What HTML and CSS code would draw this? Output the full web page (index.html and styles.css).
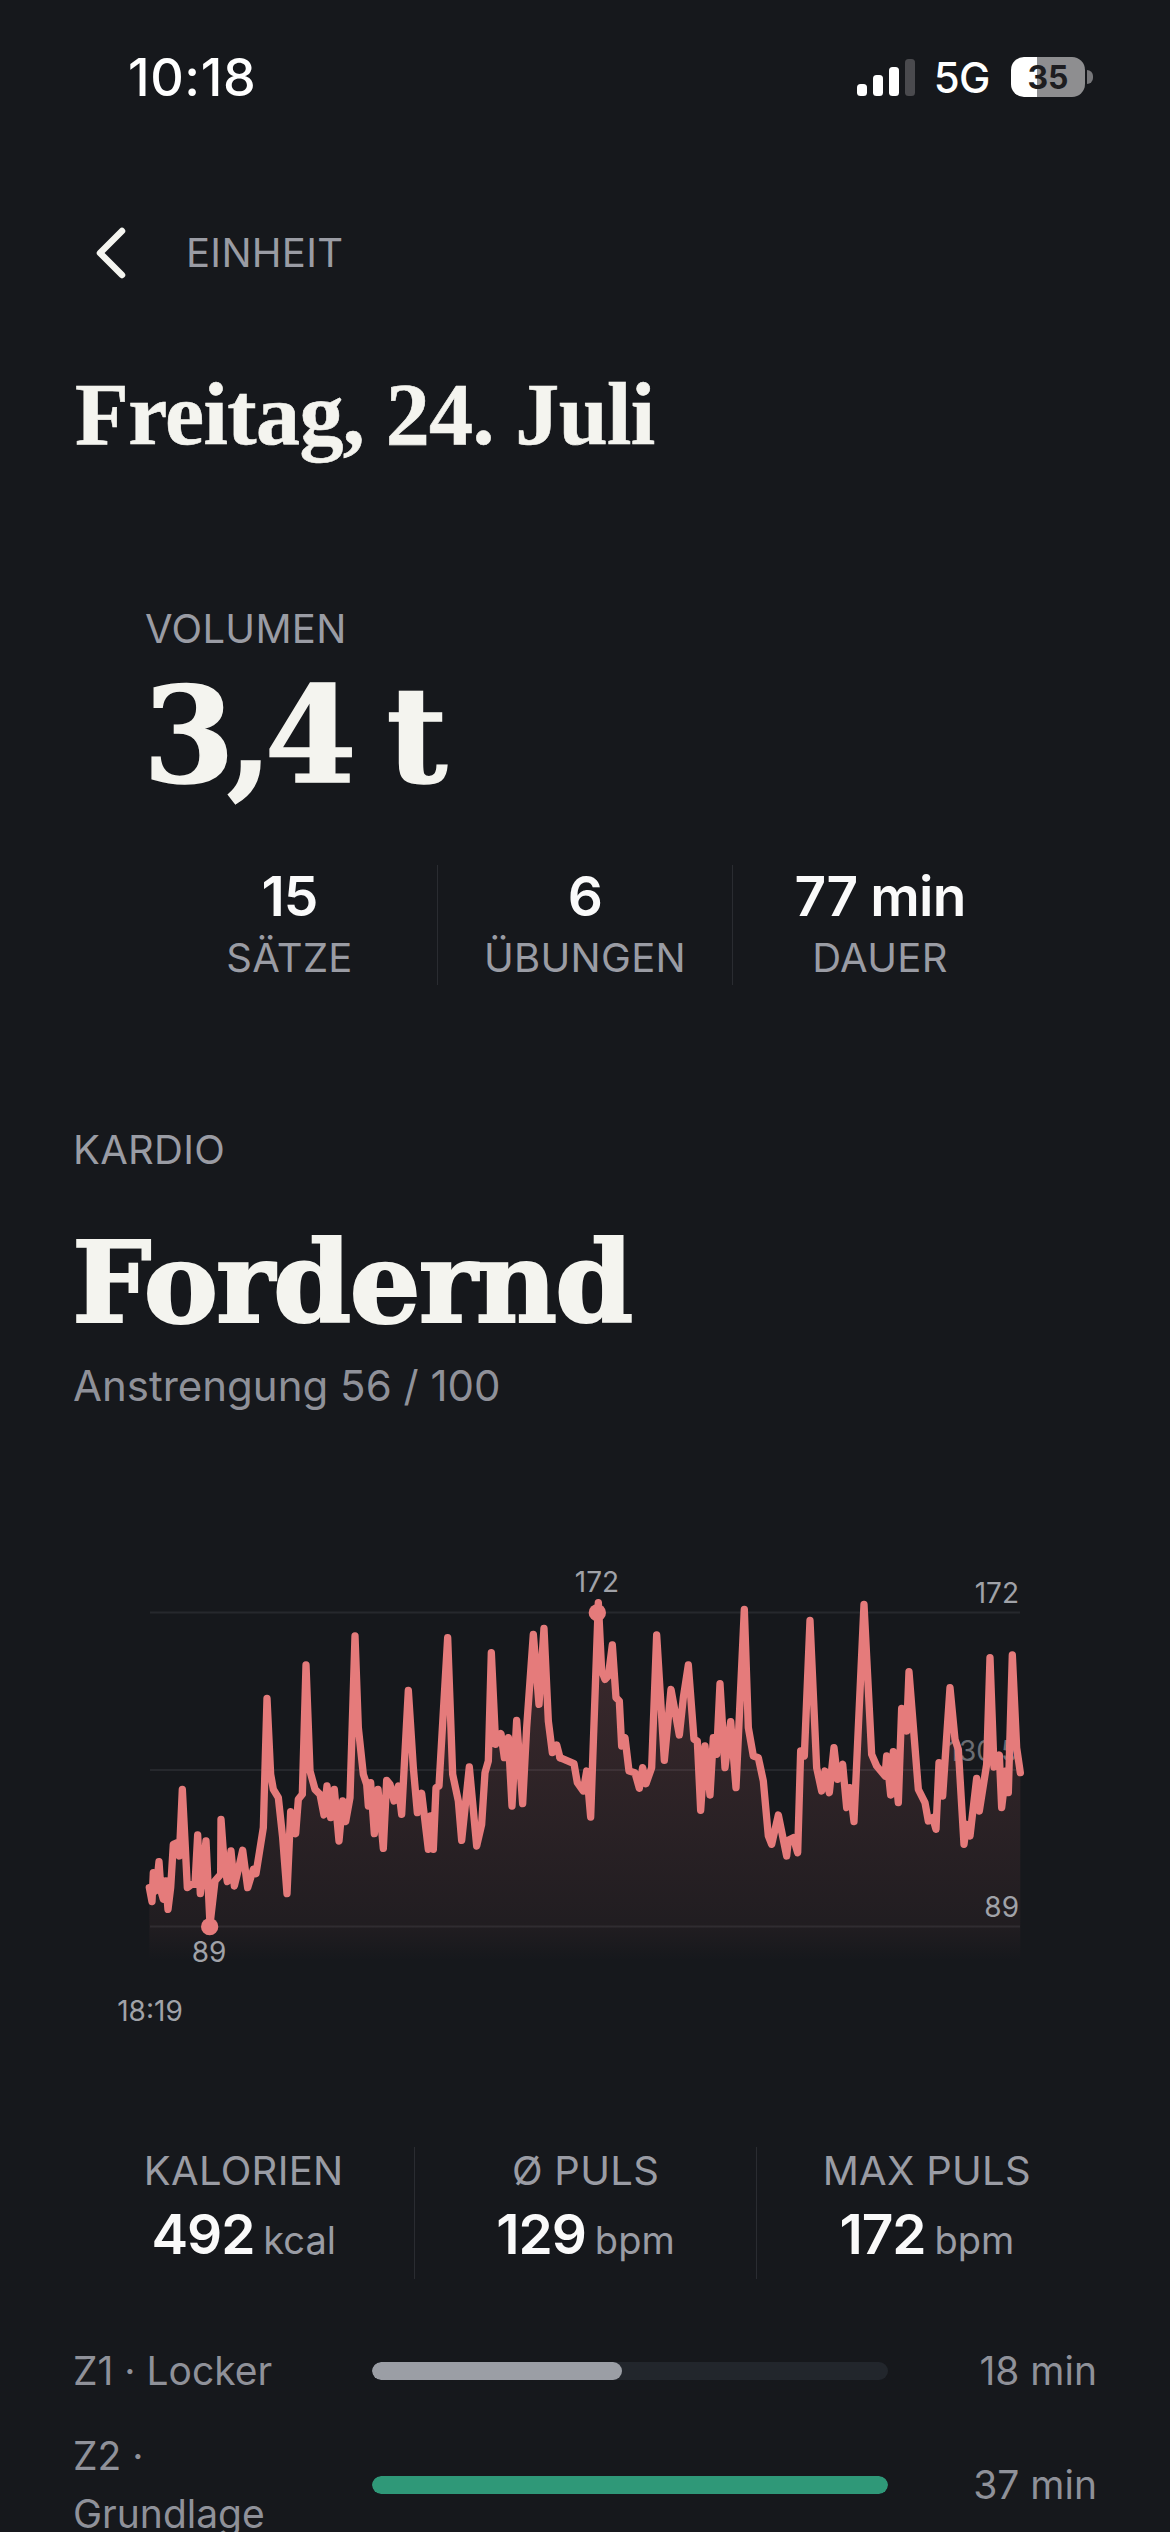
FILE: index.html
```html
<!DOCTYPE html>
<html lang="de">
<head>
<meta charset="utf-8">
<title>Einheit</title>
<link rel="stylesheet" href="styles.css">
</head>
<body>
<main class="page">
  <header class="status">
    <span class="time">10:18</span>
    <div class="status-right">
      <svg class="signal" width="58" height="38" viewBox="0 0 58 38">
        <rect x="0" y="25" width="10" height="12" rx="3.5" fill="#fff"/>
        <rect x="16" y="16" width="10" height="21" rx="3.5" fill="#fff"/>
        <rect x="32" y="8" width="10" height="29" rx="3.5" fill="#fff"/>
        <rect x="48" y="0" width="10" height="37" rx="3.5" fill="#4a4a4e"/>
      </svg>
      <span class="net">5G</span>
      <div class="battery"><span class="battery-num">35</span></div>
      <span class="battery-nub"></span>
    </div>
  </header>

  <nav class="nav">
    <svg class="chev" width="34" height="54" viewBox="0 0 34 54"><path d="M28 5 L6 27 L28 49" fill="none" stroke="#f5f5f0" stroke-width="6.5" stroke-linecap="round" stroke-linejoin="round"/></svg>
    <span class="label nav-label">EINHEIT</span>
  </nav>

  <h1 class="title">Freitag, 24. Juli</h1>

  <section class="volume">
    <div class="label">VOLUMEN</div>
    <div class="volume-num">3,4 t</div>
  </section>

  <section class="stats stats-a">
    <div class="stat"><div class="stat-val">15</div><div class="label">SÄTZE</div></div>
    <div class="stat"><div class="stat-val">6</div><div class="label">ÜBUNGEN</div></div>
    <div class="stat"><div class="stat-val">77 min</div><div class="label">DAUER</div></div>
  </section>

  <section class="cardio">
    <div class="label">KARDIO</div>
    <div class="cardio-word">Fordernd</div>
    <div class="cardio-sub">Anstrengung 56 / 100</div>
  </section>

  <svg class="chart" width="1170" height="540" viewBox="0 1520 1170 540">
    <defs>
      <linearGradient id="area" gradientUnits="userSpaceOnUse" x1="0" y1="215" x2="0" y2="1260">
        <stop offset="0" stop-color="#e87a7a" stop-opacity=".19"/>
        <stop offset=".9" stop-color="#e87a7a" stop-opacity=".05"/>
        <stop offset="1" stop-color="#e87a7a" stop-opacity="0"/>
      </linearGradient>
    </defs>
    <g class="grid">
      <line x1="150" y1="1611.5" x2="1020" y2="1611.5"/>
      <line x1="150" y1="1769" x2="1020" y2="1769"/>
      <line x1="150" y1="1925.5" x2="1020" y2="1925.5"/>
    </g>
    <text class="axis dim" x="1018" y="1760" text-anchor="end">130.5</text>
    <g transform="translate(100 1540) scale(.33333)">
      <path class="area" d="M148 1040 156 1082 160 995 168 1050 177 962 183 1050 190 1075 197 1020 204 1105 212 1040 220 910 232 905 238 945 247 745 255 900 262 1040 275 1030 285 1030 293 882 301 1058 318 900 330 1150 345 1020 362 1000 363 835 372 960 382 1022 393 930 403 1035 414 990 428 928 443 1040 460 985 468 998 490 860 501 472 512 700 520 745 535 770 548 890 561 1058 572 812 587 878 595 775 607 760 618 372 630 690 645 745 660 760 672 822 681 735 692 830 703 745 717 900 728 780 737 842 750 770 765 285 775 560 790 700 800 730 805 795 812 725 823 878 834 745 850 922 860 718 870 730 882 780 895 735 905 820 925 448 940 680 952 815 965 757 985 925 992 825 1000 925 1008 740 1017 735 1043 290 1058 700 1075 780 1085 898 1108 678 1130 915 1145 850 1155 695 1165 660 1174 335 1187 610 1203 578 1213 650 1225 590 1236 795 1250 538 1268 788 1280 560 1300 280 1317 490 1332 262 1345 540 1357 635 1370 612 1380 650 L1380 1260 L148 1260 Z"/>
      <path class="line" d="M148 1040 156 1082 160 995 168 1050 177 962 183 1050 190 1075 197 1020 204 1105 212 1040 220 910 232 905 238 945 247 745 255 900 262 1040 275 1030 285 1030 293 882 301 1058 318 900 330 1150 345 1020 362 1000 363 835 372 960 382 1022 393 930 403 1035 414 990 428 928 443 1040 460 985 468 998 490 860 501 472 512 700 520 745 535 770 548 890 561 1058 572 812 587 878 595 775 607 760 618 372 630 690 645 745 660 760 672 822 681 735 692 830 703 745 717 900 728 780 737 842 750 770 765 285 775 560 790 700 800 730 805 795 812 725 823 878 834 745 850 922 860 718 870 730 882 780 895 735 905 820 925 448 940 680 952 815 965 757 985 925 992 825 1000 925 1008 740 1017 735 1043 290 1058 700 1075 780 1085 898 1108 678 1130 915 1145 850 1155 695 1165 660 1174 335 1187 610 1203 578 1213 650 1225 590 1236 795 1250 538 1268 788 1280 560 1300 280 1317 490 1332 262 1345 540 1357 635 1370 612 1380 650"/>
      <g transform="translate(1380)">
        <path class="area" d="M0 650 42 668 52 725 70 750 80 690 92 828 115 185 125 390 135 415 145 405 157 312 168 470 178 480 185 615 195 590 207 690 225 695 238 742 248 680 258 728 275 680 290 282 313 658 333 445 358 582 370 470 385 372 402 595 412 600 422 808 435 615 450 762 460 590 470 640 480 428 495 680 512 542 528 740 553 205 565 560 580 645 595 650 610 720 625 885 635 910 655 822 680 945 685 898 700 890 713 935 722 630 733 645 750 238 770 680 785 750 795 690 808 755 822 620 833 715 848 670 860 800 870 740 882 842 912 190 935 640 950 675 975 705 980 645 992 762 1000 632 1015 785 1025 502 1040 570 1047 392 1075 745 1095 785 1105 840 1118 830 1128 865 1137 665 1148 765 1170 440 1185 595 1195 625 1212 910 1220 850 1230 885 1250 712 1258 810 1280 670 1290 350 1302 678 1318 642 1325 800 1338 690 1345 755 1357 342 1370 620 1381 695 L1381 1260 L0 1260 Z"/>
        <path class="line" d="M0 650 42 668 52 725 70 750 80 690 92 828 115 185 125 390 135 415 145 405 157 312 168 470 178 480 185 615 195 590 207 690 225 695 238 742 248 680 258 728 275 680 290 282 313 658 333 445 358 582 370 470 385 372 402 595 412 600 422 808 435 615 450 762 460 590 470 640 480 428 495 680 512 542 528 740 553 205 565 560 580 645 595 650 610 720 625 885 635 910 655 822 680 945 685 898 700 890 713 935 722 630 733 645 750 238 770 680 785 750 795 690 808 755 822 620 833 715 848 670 860 800 870 740 882 842 912 190 935 640 950 675 975 705 980 645 992 762 1000 632 1015 785 1025 502 1040 570 1047 392 1075 745 1095 785 1105 840 1118 830 1128 865 1137 665 1148 765 1170 440 1185 595 1195 625 1212 910 1220 850 1230 885 1250 712 1258 810 1280 670 1290 350 1302 678 1318 642 1325 800 1338 690 1345 755 1357 342 1370 620 1381 695"/>
        <circle class="dot" cx="112" cy="215" r="26"/>
      </g>
      <circle class="dot" cx="329" cy="1157" r="26"/>
    </g>
    <text class="axis" x="597" y="1591" text-anchor="middle">172</text>
    <text class="axis" x="1019" y="1602" text-anchor="end">172</text>
    <text class="axis" x="1019" y="1916" text-anchor="end">89</text>
    <text class="axis" x="209" y="1961" text-anchor="middle">89</text>
    <text class="axis" x="150" y="2020" text-anchor="middle">18:19</text>
  </svg>

  <section class="stats stats-b">
    <div class="stat"><div class="label">KALORIEN</div><div class="stat-big">492 <span class="unit">kcal</span></div></div>
    <div class="stat"><div class="label">Ø PULS</div><div class="stat-big">129 <span class="unit">bpm</span></div></div>
    <div class="stat"><div class="label">MAX PULS</div><div class="stat-big">172 <span class="unit">bpm</span></div></div>
  </section>

  <section class="zones">
    <div class="zone">
      <div class="zone-name">Z1 · Locker</div>
      <div class="track"><div class="bar bar-grey" style="width:48.5%"></div></div>
      <div class="zone-val">18 min</div>
    </div>
    <div class="zone">
      <div class="zone-name">Z2 · Grundlage</div>
      <div class="track"><div class="bar bar-green" style="width:100%"></div></div>
      <div class="zone-val">37 min</div>
    </div>
  </section>
</main>
</body>
</html>
```
FILE: styles.css
```css
* { box-sizing: border-box; }
html, body { margin: 0; padding: 0; background: #16181c; height: 2532px; overflow: hidden; }
body { font-family: Inter, "Liberation Sans", sans-serif; color: #f7f7f3; }
.page { width: 1170px; height: 2532px; overflow: hidden; position: relative; }

.status { height: 154px; display: flex; justify-content: space-between; align-items: center; padding: 0 77px 0 128px; }
.time { font-size: 52px; font-weight: 500; color: #fff; letter-spacing: .6px; }
.status-right { display: flex; align-items: center; }
.signal { margin-right: 19px; margin-top: 2px; }
.net { font-size: 42px; font-weight: 500; color: #fff; margin-right: 21px; letter-spacing: -.5px; }
.battery { width: 74px; height: 40px; border-radius: 13px; background: linear-gradient(90deg, #fff 35%, #8e8e90 35%); display: flex; align-items: center; justify-content: center; }
.battery-num { font-size: 32px; font-weight: 700; color: #1d1d20; }
.battery-nub { width: 6px; height: 14px; margin-left: 2px; border-radius: 0 7px 7px 0; background: #77777a; }

.label { font-size: 40px; color: #9a9ca4; line-height: 46px; letter-spacing: .3px; }
.nav { height: 60px; margin-top: 69px; padding-left: 94px; display: flex; align-items: center; }
.chev { margin-right: 58px; }

.title { margin: 82px 0 0 75px; font-family: "Liberation Serif", serif; font-weight: 700; font-size: 88px; line-height: 100px; letter-spacing: -.6px; color: #f4f4ef; -webkit-text-stroke: .6px #f4f4ef; }

.volume { margin: 141px 0 0 145px; }
.volume-num { font-family: "DejaVu Serif", serif; font-weight: 700; font-size: 132px; line-height: 150px; letter-spacing: -8px; margin: 9px 0 0 -2px; color: #f4f4ef; -webkit-text-stroke: 1.5px #f4f4ef; }

.stats { display: grid; grid-template-columns: repeat(3, 1fr); }
.stat { text-align: center; }
.stat + .stat { border-left: 1px solid #2a2c31; }
.stats-a { margin: 54px 0 0 142px; width: 885px; height: 120px; }
.stat-val { font-size: 55px; font-weight: 600; line-height: 62px; color: #fafafa; letter-spacing: -.8px; margin-bottom: 8px; }

.cardio { margin: 142px 0 0 73px; }
.cardio-word { font-family: "DejaVu Serif", serif; font-weight: 700; font-size: 112px; line-height: 150px; letter-spacing: -2px; margin: 35px 0 0 -1px; color: #f4f4ef; -webkit-text-stroke: 2px #f4f4ef; }
.cardio-sub { font-size: 42px; line-height: 50px; color: #8f9199; margin-top: 3px; }

.chart { display: block; margin-top: 110px; }
.grid line { stroke: #26282d; stroke-width: 2; }
.axis { font-family: Inter, "Liberation Sans", sans-serif; font-size: 28px; fill: #a0a2a8; }
.axis.dim { fill: #6b6d73; }
.area { fill: url(#area); }
.line { fill: none; stroke: #e57b7b; stroke-width: 22; stroke-linejoin: round; stroke-linecap: round; }
.dot { fill: #e57b7b; }

.stats-b { margin: 86px 0 0 73px; width: 1024px; height: 124px; }
.stats-b .label { line-height: 48px; }
.stat-big { font-size: 55px; font-weight: 600; line-height: 78px; color: #fafafa; letter-spacing: -1px; }
.unit { font-size: 38px; font-weight: 400; color: #9a9ca4; letter-spacing: 0; margin-left: -4px; }

.zones { margin: 71px 0 0 73px; width: 1024px; }
.zone { display: grid; grid-template-columns: 265px 516px 1fr; column-gap: 34px; align-items: center; margin-bottom: 27px; }
.zone-name { font-size: 39px; line-height: 58px; color: #8f9199; }
.zone-val { font-size: 39px; line-height: 58px; color: #8f9199; text-align: right; }
.track { height: 18px; border-radius: 9px; background: #22262c; overflow: hidden; }
.bar { height: 18px; border-radius: 9px; }
.bar-grey { background: #9b9ea5; }
.bar-green { background: #2f9878; }
```
